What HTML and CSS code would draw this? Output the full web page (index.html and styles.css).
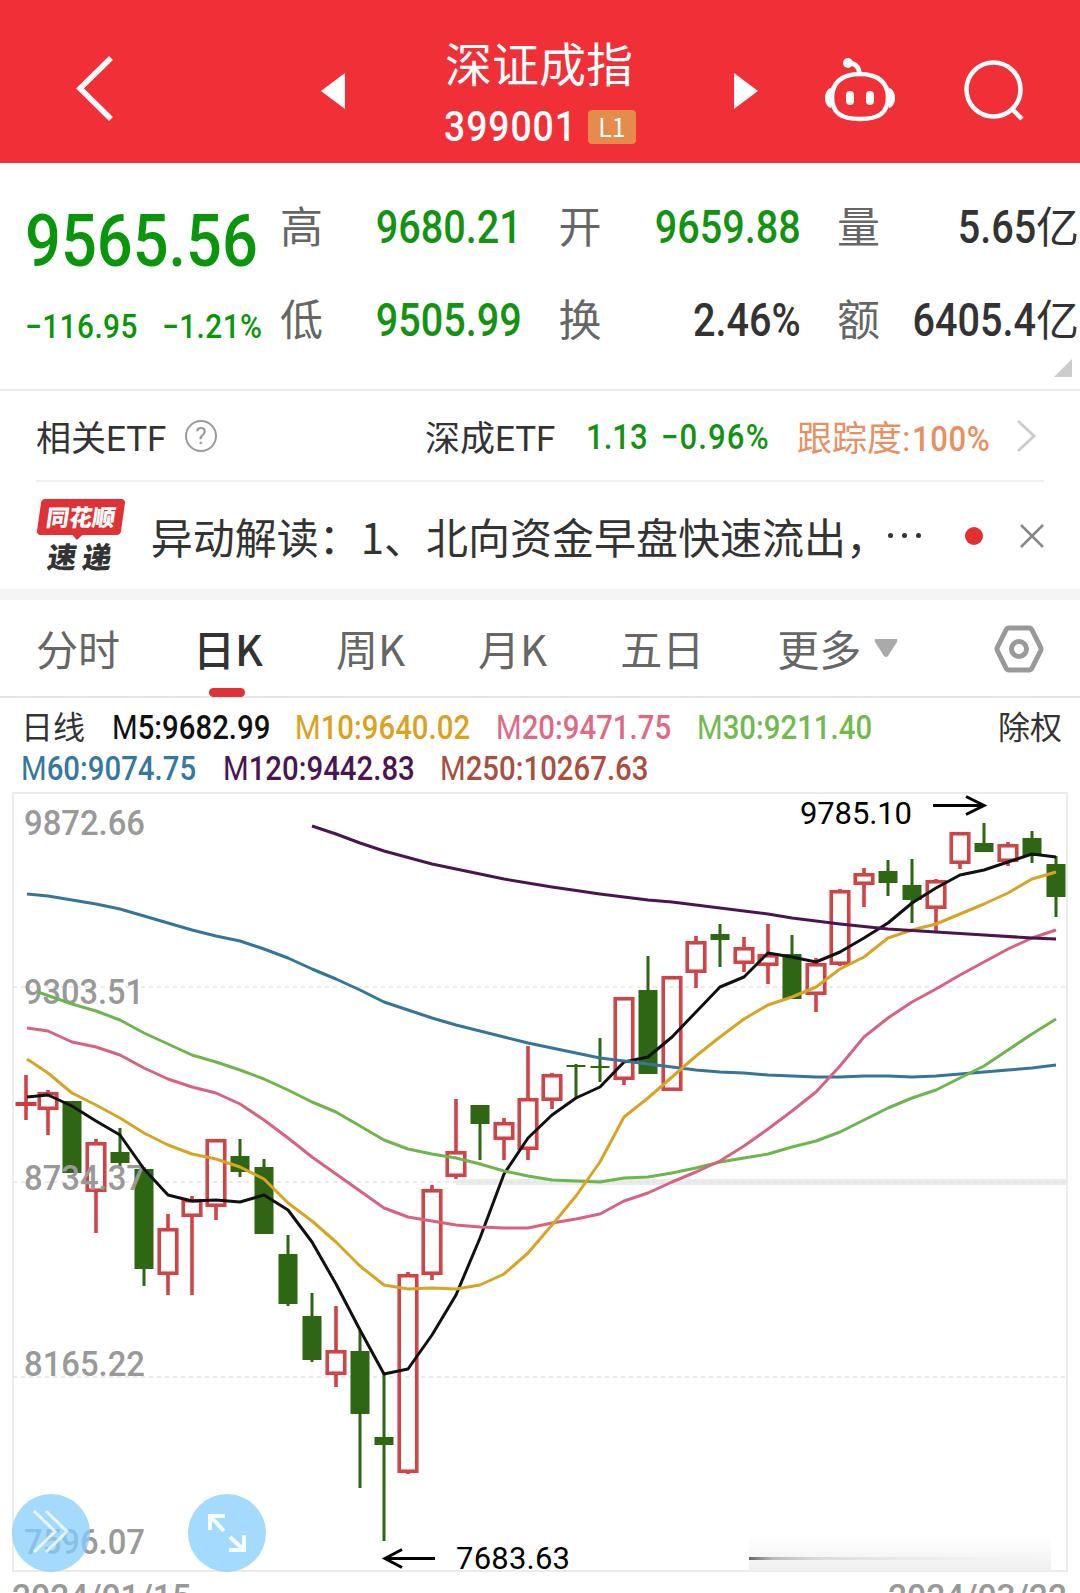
FILE: index.html
```html
<!DOCTYPE html>
<html lang="zh-CN">
<head>
    <meta charset="UTF-8">
    <meta name="viewport" content="width=device-width, initial-scale=1.0">
    <title>深证成指 399001</title>
    <link rel="stylesheet" href="styles.css">
</head>
<body>

<header class="header">
    <svg class="back" width="40" height="70" viewBox="0 0 40 70"><path d="M37 5 L6 35.5 L37 66"/></svg>
    <svg class="prev" width="24" height="36" viewBox="0 0 24 36"><path d="M24 0 V36 L0 18 Z"/></svg>
    <div class="title">
        <h1>深证成指</h1>
        <div class="code"><span class="num">399001</span><span class="badge">L1</span></div>
    </div>
    <svg class="next" width="24" height="36" viewBox="0 0 24 36"><path d="M0 0 V36 L24 18 Z"/></svg>
    <svg class="robot" width="72" height="66" viewBox="0 0 72 66">
        <circle cx="24" cy="6" r="5" class="fill"/>
        <path d="M24 6 C31 6 35 9 35.500 17"/>
        <path d="M36 17 C54 17 64 26 64 40 C64 56 55 62 36 62 C17 62 8 56 8 40 C8 26 18 17 36 17 Z"/>
        <path class="fill" d="M7 31 C-1 33 -1 49 7 51 Z M65 31 C73 33 73 49 65 51 Z"/>
        <rect class="fill" x="22" y="34" width="8" height="14" rx="4"/>
        <rect class="fill" x="42" y="34" width="8" height="14" rx="4"/>
    </svg>
    <svg class="search" width="64" height="64" viewBox="0 0 64 64">
        <circle cx="30.500" cy="30.500" r="27"/>
        <path d="M49 50 L59 60"/>
    </svg>
</header>

<section class="quote">
    <div class="price">
        <div class="last num">9565.56</div>
        <div class="change"><span class="num">−116.95</span><span class="num">−1.21%</span></div>
    </div>
    <div class="stats">
        <div class="stat"><label>高</label><span class="num down">9680.21</span></div>
        <div class="stat"><label>开</label><span class="num down">9659.88</span></div>
        <div class="stat"><label>量</label><span class="unit"><span class="num">5.65</span>亿</span></div>
        <div class="stat"><label>低</label><span class="num down">9505.99</span></div>
        <div class="stat"><label>换</label><span class="num">2.46%</span></div>
        <div class="stat"><label>额</label><span class="unit"><span class="num">6405.4</span>亿</span></div>
    </div>
    <i class="corner"></i>
</section>

<section class="etf">
    <span class="etf-label">相关ETF</span>
    <span class="help">?</span>
    <span class="etf-name">深成ETF</span>
    <span class="etf-price num">1.13</span>
    <span class="etf-rate num">−0.96%</span>
    <span class="etf-track">跟踪度:<span class="num">100%</span></span>
    <svg width="22" height="36" viewBox="0 0 22 36"><path d="M3 3 L19 18 L3 33"/></svg>
</section>

<section class="news">
    <div class="logo">
        <div class="logo-tag"><span>同花顺</span></div>
        <div class="logo-sub">速递</div>
    </div>
    <div class="news-text">异动解读：1、北向资金早盘快速流出，</div>
    <div class="dots"><i></i><i></i><i></i></div>
    <i class="dot"></i>
    <svg width="26" height="26" viewBox="0 0 26 26"><path d="M2 2 L24 24 M24 2 L2 24"/></svg>
</section>

<nav class="tabs">
    <span class="tab">分时</span>
    <span class="tab active">日K</span>
    <span class="tab">周K</span>
    <span class="tab">月K</span>
    <span class="tab">五日</span>
    <span class="tab">更多</span>
    <svg class="caret" width="24" height="19" viewBox="0 0 24 19"><path d="M1 0 H23 Q24 1 23 3 L14 17 Q12 19 10 17 L1 3 Q0 1 1 0 Z"/></svg>
    <svg class="setting" width="50" height="48" viewBox="0 0 50 48">
        <path d="M15 3 H35 Q37 3 38 5 L46.500 22 Q47.500 24 46.500 26 L38 43 Q37 45 35 45 H15 Q13 45 12 43 L3.500 26 Q2.500 24 3.500 22 L12 5 Q13 3 15 3 Z"/>
        <circle cx="25" cy="24" r="7.500"/>
    </svg>
</nav>

<section class="ma">
    <div class="ma-row">
        <span class="ma-name">日线</span>
        <span class="num m5"><b>M</b>5:9682.99</span>
        <span class="num m10"><b>M</b>10:9640.02</span>
        <span class="num m20"><b>M</b>20:9471.75</span>
        <span class="num m30"><b>M</b>30:9211.40</span>
        <span class="ma-right">除权</span>
    </div>
    <div class="ma-row">
        <span class="num m60"><b>M</b>60:9074.75</span>
        <span class="num m120"><b>M</b>120:9442.83</span>
        <span class="num m250"><b>M</b>250:10267.63</span>
    </div>
</section>

<svg class="chart" width="1080" height="803" viewBox="0 790 1080 803">
    <defs>
        <linearGradient id="fade" x1="0" y1="0" x2="0" y2="1">
            <stop offset="0" stop-color="#f0f0f0" stop-opacity="0"/>
            <stop offset="1" stop-color="#f0f0f0"/>
        </linearGradient>
        <linearGradient id="tail" x1="0" y1="0" x2="1" y2="0">
            <stop offset="0" stop-color="#666"/>
            <stop offset="0.08" stop-color="#bbb"/>
            <stop offset="0.25" stop-color="#ddd"/>
            <stop offset="1" stop-color="#eee" stop-opacity="0"/>
        </linearGradient>
    </defs>
    <rect x="456" y="1179" width="611" height="6" fill="#ebebeb"/>
    <rect class="frame" x="13" y="793" width="1054" height="778"/>
    <path class="grid" d="M13 987 H1067 M13 1182 H1067 M13 1377 H1067"/>
    <rect x="749" y="1535" width="302" height="36" fill="url(#fade)"/>
    <rect x="749" y="1557" width="302" height="3" fill="url(#tail)"/>

    <g id="candles"></g>

    <g class="axis">
        <text x="24" y="835" textLength="121" lengthAdjust="spacingAndGlyphs">9872.66</text>
        <text x="24" y="1004" textLength="120" lengthAdjust="spacingAndGlyphs">9303.51</text>
        <text x="24" y="1190" textLength="121" lengthAdjust="spacingAndGlyphs">8734.37</text>
        <text x="24" y="1376" textLength="121" lengthAdjust="spacingAndGlyphs">8165.22</text>
        <text x="24" y="1554" textLength="121" lengthAdjust="spacingAndGlyphs">7596.07</text>
        <text x="12" y="1609" textLength="179" lengthAdjust="spacingAndGlyphs">2024/01/15</text>
        <text x="888" y="1609" textLength="179" lengthAdjust="spacingAndGlyphs">2024/03/22</text>
    </g>

    <g id="lines"></g>

    <g class="mark">
        <text x="800" y="824" textLength="112">9785.10</text>
        <path d="M933 805.500 H984 M966 796.500 L984 805.500 L966 814.500"/>
        <text x="456" y="1569" textLength="114">7683.63</text>
        <path d="M435 1558.500 H385 M402 1549.500 L385 1558.500 L402 1567.500"/>
    </g>

    <g class="float">
        <circle cx="51" cy="1533" r="39"/>
        <path class="thin" d="M34 1511 L55 1531.500 L34 1552 M46 1511 L67 1531.500 L46 1552"/>
        <circle cx="227" cy="1533" r="39"/>
        <path d="M224 1531 L210 1516 M210 1530 V1516 H225 M230 1537 L244 1550 M244 1535 V1550 H229"/>
    </g>
</svg>

<script>
    // type, body top, body bottom, high, low
    const candles = [
        ['up', 1102, 1106, 1075, 1120], ['up', 1092, 1110, 1090, 1135], ['down', 1101, 1173, 1101, 1173],
        ['up', 1142, 1192, 1139, 1233], ['down', 1152, 1163, 1128, 1166], ['down', 1169, 1269, 1167, 1286],
        ['up', 1228, 1275, 1214, 1295], ['up', 1199, 1217, 1196, 1295], ['up', 1139, 1207, 1139, 1220],
        ['down', 1156, 1172, 1139, 1177], ['down', 1167, 1234, 1159, 1234], ['down', 1254, 1304, 1235, 1306],
        ['down', 1316, 1360, 1293, 1362], ['up', 1350, 1375, 1306, 1387], ['down', 1351, 1414, 1331, 1488],
        ['down', 1437, 1445, 1374, 1541], ['up', 1274, 1473, 1272, 1474], ['up', 1189, 1275, 1185, 1280],
        ['up', 1151, 1177, 1099, 1179], ['down', 1105, 1124, 1105, 1160], ['up', 1122, 1140, 1118, 1160],
        ['up', 1098, 1150, 1046, 1160], ['up', 1074, 1101, 1073, 1109], ['down', 1065, 1067, 1064, 1098],
        ['down', 1066, 1068, 1038, 1082], ['up', 997, 1080, 997, 1085], ['down', 990, 1074, 956, 1074],
        ['up', 976, 1091, 976, 1091], ['up', 941, 973, 936, 988], ['down', 934, 940, 924, 967],
        ['up', 947, 964, 937, 972], ['up', 954, 966, 924, 984], ['down', 954, 999, 935, 999],
        ['up', 963, 995, 958, 1012], ['up', 890, 965, 889, 966], ['up', 873, 885, 868, 907],
        ['down', 871, 883, 860, 896], ['down', 885, 900, 859, 923], ['up', 880, 909, 879, 932],
        ['up', 832, 864, 832, 869], ['down', 843, 852, 823, 852], ['up', 844, 862, 842, 866],
        ['down', 838, 856, 831, 863], ['down', 864, 897, 856, 917]
    ];

    const lines = {
        m5: '27,1097 48,1095 72,1106 96,1121 120,1135 144,1169 168,1195 192,1201 216,1200 240,1202 264,1195 288,1210 312,1242 336,1284 360,1330 384,1374 408,1369 432,1335 456,1295 480,1238 504,1174 528,1138 552,1115 576,1098 600,1087 624,1062 648,1057 672,1037 696,1012 720,987 744,977 768,953 792,957 816,962 840,952 864,938 888,923 912,903 936,888 960,875 984,870 1008,862 1032,854 1056,857',
        m10: '27,1059 48,1073 72,1093 96,1105 120,1118 144,1133 168,1145 192,1154 216,1159 240,1167 264,1179 288,1203 312,1221 336,1242 360,1266 384,1285 408,1289 432,1288 456,1289 480,1285 504,1274 528,1253 552,1225 576,1196 600,1162 624,1117 648,1098 672,1077 696,1056 720,1037 744,1019 768,1005 792,997 816,987 840,969 864,957 888,938 912,930 936,924 960,914 984,904 1008,893 1032,879 1056,872',
        m20: '27,1028 48,1031 72,1042 96,1047 120,1055 144,1068 168,1079 192,1087 216,1093 240,1104 264,1120 288,1138 312,1157 336,1174 360,1191 384,1208 408,1217 432,1221 456,1225 480,1227 504,1228 528,1228 552,1223 576,1219 600,1214 624,1201 648,1193 672,1182 696,1172 720,1161 744,1146 768,1129 792,1111 816,1092 840,1066 864,1037 888,1018 912,1002 936,989 960,975 984,962 1008,949 1032,938 1056,930',
        m30: '38,992 72,1004 96,1011 120,1020 144,1033 168,1044 192,1055 216,1062 240,1070 264,1079 288,1090 312,1102 336,1112 360,1126 384,1140 408,1149 432,1154 456,1158 480,1164 504,1171 528,1176 552,1180 576,1181 600,1182 624,1178 648,1177 672,1173 696,1168 720,1162 744,1158 768,1154 792,1147 816,1141 840,1132 864,1120 888,1108 912,1098 936,1090 960,1078 984,1066 1008,1050 1032,1034 1056,1019',
        m60: '27,894 48,896 72,900 96,904 120,909 144,916 168,923 192,930 216,936 240,941 264,949 288,958 312,969 336,979 360,990 384,1002 432,1018 456,1025 480,1031 504,1037 528,1043 576,1053 600,1058 624,1061 648,1064 672,1067 696,1070 720,1072 744,1073 768,1075 792,1076 816,1077 840,1077 864,1076 888,1076 912,1077 936,1076 984,1072 1008,1070 1032,1068 1056,1065',
        m120: '312,826 336,834 360,843 384,851 432,864 480,874 504,879 552,887 600,894 648,900 672,902 720,908 768,914 792,918 840,924 888,929 936,932 984,935 1032,938 1056,939'
    };

    let html = '';
    candles.forEach(([type, top, bottom, high, low], i) => {
        const x = i === 0 ? 26 : 24 + i * 24;
        html += `<path class="${type}" d="M${x} ${high} V${top} M${x} ${bottom} V${low}"/>`;
        if (type === 'down') {
            html += `<rect class="down-body" x="${x - 9.5}" y="${top}" width="19" height="${bottom - top}"/>`;
        } else if (bottom - top < 6) {
            html += `<rect class="up-flat" x="${x - 10.5}" y="${top}" width="21" height="${bottom - top}"/>`;
        } else {
            html += `<rect class="up" x="${x - 8.75}" y="${top + 1.75}" width="17.5" height="${bottom - top - 3.5}"/>`;
        }
    });
    document.getElementById('candles').innerHTML = html;

    document.getElementById('lines').innerHTML = ['m5', 'm60', 'm30', 'm20', 'm10', 'm120']
        .map(name => `<polyline class="${name}" points="${lines[name]}"/>`).join('');
</script>

</body>
</html>
```

FILE: styles.css
```css
* {
    box-sizing: border-box;
}
body {
    margin: 0;
    width: 1080px;
    height: 1593px;
    overflow: hidden;
    background-color: #fff;
    color: #333;
    font-family: "Noto Sans CJK SC", sans-serif;
    white-space: nowrap;
}
svg {
    display: block;
    flex: none;
}
/* digits are set narrow, like a DIN face */
.num {
    display: inline-block;
    font-family: Roboto, "Noto Sans CJK SC", sans-serif;
    font-weight: 500;
    transform: scaleX(0.89);
    transform-origin: left center;
}
.down {
    color: #129412;
}

/* header */
.header {
    display: flex;
    align-items: flex-start;
    height: 163px;
    background-color: #f12f37;
    color: #fff;
}
.header svg {
    fill: #fff;
}
.header .back {
    margin: 53px 0 0 74px;
    fill: none;
    stroke: #fff;
    stroke-width: 5.5;
}
.prev {
    margin: 73px 0 0 207px;
}
.title {
    width: 194px;
    margin: 34px 0 0 99px;
}
.title h1 {
    margin: 0 0 0 1px;
    font-size: 47px;
    font-weight: 400;
    line-height: 56px;
}
.code {
    display: flex;
    align-items: center;
    height: 34px;
    margin-top: 20px;
}
.code .num {
    width: 144px;
    font-size: 42px;
    line-height: 34px;
    letter-spacing: 1px;
}
.badge {
    width: 48px;
    height: 34px;
    border-radius: 4px;
    background-color: #e58b4b;
    font-size: 25px;
    line-height: 33px;
    text-align: center;
}
.next {
    margin: 73px 0 0 96px;
}
.header .robot {
    margin: 57px 0 0 66px;
    fill: none;
    stroke: #fff;
    stroke-width: 4.5;
}
.header .robot .fill {
    fill: #fff;
    stroke: none;
}
.header .search {
    margin: 59px 0 0 67px;
    fill: none;
    stroke: #fff;
    stroke-width: 4.5;
}

/* quote */
.quote {
    position: relative;
    display: flex;
    height: 228px;
    border-bottom: 2px solid #ebebeb;
}
.price {
    width: 280px;
    padding: 38px 0 0 25px;
    color: #0a960a;
}
.last {
    font-size: 73px;
    line-height: 80px;
    transform: scaleX(0.865);
}
.change {
    display: flex;
    margin-top: 26px;
    font-size: 33.5px;
    line-height: 40px;
}
.change .num {
    letter-spacing: 0.5px;
}
.change .num:first-child {
    width: 137px;
}
.stats {
    display: grid;
    grid-template-columns: repeat(3, 242px);
    grid-template-rows: 94px 92px;
    column-gap: 36.5px;
    padding-top: 14px;
}
.stat {
    display: flex;
    justify-content: space-between;
    align-items: center;
    font-size: 43px;
}
.stat label {
    color: #666;
}
.stat .num {
    margin-top: 7px;
    font-size: 45.5px;
    transform: scaleX(0.87);
    transform-origin: right center;
}
.stat .unit .num {
    margin-top: 0;
}
.corner {
    position: absolute;
    right: 8px;
    bottom: 12px;
    border-left: 18px solid transparent;
    border-bottom: 18px solid #ccc;
}

/* etf */
.etf {
    display: flex;
    align-items: center;
    height: 91px;
    margin: 0 36px;
    border-bottom: 2px solid #f0f0f0;
    font-family: Roboto, "Noto Sans CJK SC", sans-serif;
    font-size: 35px;
}
.etf-label {
    width: 149px;
}
.help {
    width: 32px;
    height: 32px;
    border: 2px solid #999;
    border-radius: 50%;
    color: #999;
    font-size: 24px;
    line-height: 29px;
    text-align: center;
}
.etf-name {
    width: 161px;
    margin-left: 208px;
}
.etf .num {
    position: relative;
    top: 2px;
}
.etf-price {
    width: 75px;
    color: #129412;
}
.etf-rate {
    width: 136px;
    color: #129412;
    letter-spacing: 1.2px;
}
.etf-track {
    width: 218px;
    color: #e89062;
}
.etf-track .num {
    top: 0;
    margin-left: 2px;
    letter-spacing: 0.6px;
}
.etf svg {
    fill: none;
    stroke: #ccc;
    stroke-width: 3;
}

/* news */
.news {
    display: flex;
    align-items: center;
    height: 107px;
    padding: 0 35px 0 36px;
}
.logo {
    width: 89px;
    height: 71px;
    margin-bottom: 2px;
}
.logo-tag {
    position: relative;
    width: 84px;
    height: 36px;
    margin-left: 3px;
    border-radius: 4px;
    background-color: #e03236;
    color: #fff;
    font-size: 23px;
    font-weight: 900;
    line-height: 35px;
    text-align: center;
    transform: skewX(-8deg);
}
.logo-tag::after {
    content: "";
    position: absolute;
    left: 35px;
    top: 35px;
    border: 6px solid transparent;
    border-top-color: #e03236;
    border-bottom: 0;
}
.logo-sub {
    margin-left: 12px;
    font-size: 29px;
    font-weight: 900;
    letter-spacing: 6px;
    line-height: 40px;
    transform: skewX(-8deg);
}
.news-text {
    width: 739px;
    margin: -1px 0 0 26px;
    font-size: 42px;
}
.dots {
    display: flex;
    gap: 9px;
}
.dots i {
    width: 5px;
    height: 5px;
    border-radius: 50%;
    background-color: #333;
}
.dot {
    width: 18px;
    height: 18px;
    margin: 0 36px 0 44px;
    border-radius: 50%;
    background-color: #e6302f;
}
.news svg {
    fill: none;
    stroke: #888;
    stroke-width: 2.5;
}

/* tabs */
.tabs {
    display: flex;
    align-items: center;
    height: 109px;
    padding-left: 36px;
    border-top: 11px solid #f5f5f5;
    border-bottom: 2px solid #e6e6e6;
    color: #666;
    font-size: 42px;
}
.tab {
    position: relative;
    line-height: 60px;
    margin-right: 73px;
}
.tab:nth-child(5) {
    margin-right: 73px;
}
.tab:nth-child(6) {
    margin-right: 13px;
}
.tab.active {
    color: #333;
    font-weight: 500;
}
.tab.active::after {
    content: "";
    position: absolute;
    left: 16px;
    bottom: -19px;
    width: 36px;
    height: 9px;
    border-radius: 5px;
    background-color: #e03236;
}
.caret {
    fill: #aaa;
}
.setting {
    margin: 2px 0 0 96px;
    fill: none;
    stroke: #999;
    stroke-width: 5;
}

/* moving averages */
.ma {
    height: 92px;
    padding: 9px 18px 0 21px;
    font-size: 33px;
}
.ma-row {
    display: flex;
    align-items: center;
    height: 41px;
}
.ma-row b {
    font-weight: 400;
}
.ma-name,
.ma-right {
    margin-top: -5px;
    font-size: 32px;
}
.ma-name {
    width: 91px;
}
.ma-right {
    margin-left: auto;
}
.ma .m5 { width: 183px; }
.ma .m10 { width: 201px; }
.ma .m20 { width: 201px; }
.ma .m60 { width: 202px; }
.ma .m120 { width: 217px; }
.m5 { color: #111; stroke: #111; }
.m10 { color: #dca11d; stroke: #d9a424; }
.m20 { color: #e06a84; stroke: #d9637f; }
.m30 { color: #6fbb4e; stroke: #6db64d; }
.m60 { color: #37789f; stroke: #35759b; }
.m120 { color: #4b1552; stroke: #4b1552; }
.m250 { color: #a94f3f; }

/* chart */
.frame {
    fill: none;
    stroke: #ebebeb;
    stroke-width: 2;
}
.grid {
    fill: none;
    stroke: #e4e4e4;
    stroke-width: 1.5;
    stroke-dasharray: 4 4;
}
.up {
    fill: none;
    stroke: #d04448;
    stroke-width: 3.6;
}
.up-flat {
    fill: #d93438;
}
.down-body {
    fill: #2f6614;
}
path.down {
    stroke: #2f6614;
    stroke-width: 3;
}
#lines polyline {
    fill: none;
    stroke-width: 3;
    stroke-linejoin: round;
}
.axis {
    fill: #999;
    font: 500 35px Roboto, sans-serif;
}
.mark {
    fill: #000;
    font: 400 31px Roboto, sans-serif;
}
.mark path {
    fill: none;
    stroke: #000;
    stroke-width: 3;
}
.float circle {
    fill: rgba(135, 206, 255, 0.75);
}
.float path {
    fill: none;
    stroke: #fff;
    stroke-width: 4;
    opacity: 0.9;
}
.float .thin {
    stroke-width: 3;
    opacity: 0.75;
}
```
